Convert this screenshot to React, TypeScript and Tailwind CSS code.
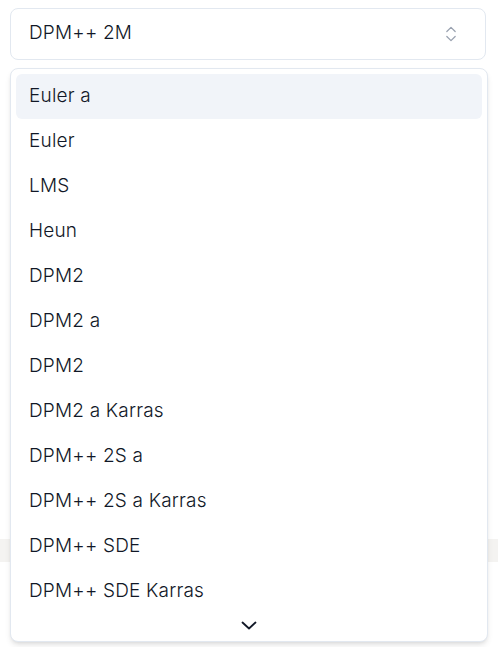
import { ChevronsUpDown } from "lucide-react";

const samplers = [
  "Euler a",
  "Euler",
  "LMS",
  "Heun",
  "DPM2",
  "DPM2 a",
  "DPM2",
  "DPM2 a Karras",
  "DPM++ 2S a",
  "DPM++ 2S a Karras",
  "DPM++ SDE",
  "DPM++ SDE Karras",
];

const App = () => {
  return (
    <div
      className="relative w-[498px] h-[647px] bg-white overflow-hidden text-[#111827]"
      style={{ fontFamily: "Inter, 'Noto Sans', sans-serif" }}
    >
      <div className="px-[10px] pt-[8px] w-[498px]">
        <button className="flex items-center justify-between w-[476px] h-[52px] pl-[18px] pr-[24px] rounded-lg border border-[#e2e8f0] bg-white text-[19px] font-light tracking-[0.01em]">
          <span className="-mt-[1px]">DPM++ 2M</span>
          <ChevronsUpDown size={20} strokeWidth={1.5} className="text-gray-400" />
        </button>
        <div className="mt-[479px] h-[23px] -mx-[10px] bg-[#f4f3f1]" />
      </div>

      {/* open listbox */}
      <div className="absolute left-[10px] top-[68px] w-[478px] h-[574px] rounded-lg border border-[#e2e8f0] bg-white shadow-md p-[5px] flex flex-col">
        {samplers.map((s, i) => (
          <div
            key={i}
            className={`h-[45px] shrink-0 flex items-center pl-[13px] pb-[1px] rounded-md text-[19px] font-light tracking-[0.01em] ${
              i === 0 ? "bg-[#f1f4f9]" : ""
            }`}
          >
            {s}
          </div>
        ))}
        <div className="flex-1 flex items-center justify-center">
          <svg width="16" height="9" viewBox="0 0 16 9" fill="none" stroke="#111827" strokeWidth="1.8" strokeLinecap="round" strokeLinejoin="round">
            <polyline points="1.5,1.5 8,7.5 14.5,1.5" />
          </svg>
        </div>
      </div>
    </div>
  );
};

export default App;
